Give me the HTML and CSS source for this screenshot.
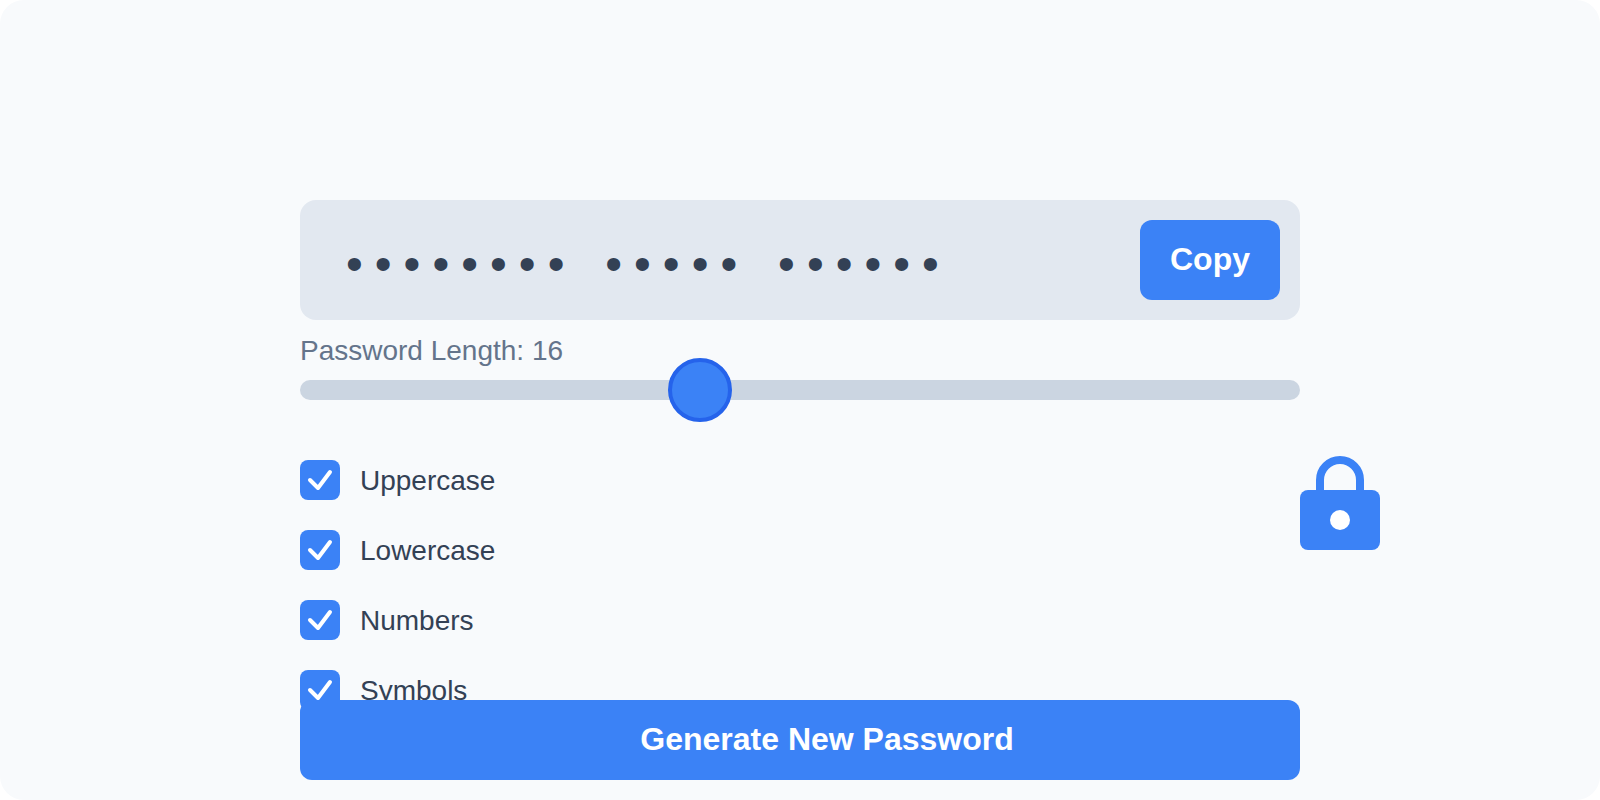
FILE: index.html
```html
<!DOCTYPE html>
<html lang="en">
<head>
<meta charset="utf-8">
<meta name="viewport" content="width=device-width, initial-scale=1">
<title>Password Generator</title>
<link rel="stylesheet" href="styles.css">
</head>
<body>
<main class="page">
  <form class="generator">
    <div class="output">
      <input class="output-field" type="text" value="•••••••• ••••• ••••••" aria-label="Generated password" readonly>
      <button class="button copy" type="button">Copy</button>
    </div>

    <label class="length-label" for="length">Password Length: 16</label>
    <input class="length-slider" id="length" type="range" min="5" max="33" value="16">

    <div class="settings">
      <div class="options">
        <label class="option">
          <span class="check">
            <input class="check-input" type="checkbox" checked>
            <svg class="check-mark" viewBox="0 0 40 40" aria-hidden="true"><path d="M10 20L18 28L30 12"/></svg>
          </span>
          Uppercase
        </label>
        <label class="option">
          <span class="check">
            <input class="check-input" type="checkbox" checked>
            <svg class="check-mark" viewBox="0 0 40 40" aria-hidden="true"><path d="M10 20L18 28L30 12"/></svg>
          </span>
          Lowercase
        </label>
        <label class="option">
          <span class="check">
            <input class="check-input" type="checkbox" checked>
            <svg class="check-mark" viewBox="0 0 40 40" aria-hidden="true"><path d="M10 20L18 28L30 12"/></svg>
          </span>
          Numbers
        </label>
        <label class="option">
          <span class="check">
            <input class="check-input" type="checkbox" checked>
            <svg class="check-mark" viewBox="0 0 40 40" aria-hidden="true"><path d="M10 20L18 28L30 12"/></svg>
          </span>
          Symbols
        </label>
      </div>
      <svg class="lock" viewBox="0 0 80 94" aria-hidden="true">
        <path d="M20 38V24a20 20 0 0 1 40 0v14" fill="none" stroke="#3b82f6" stroke-width="8"/>
        <rect y="34" width="80" height="60" rx="8" fill="#3b82f6"/>
        <circle cx="40" cy="64" r="10" fill="#fff"/>
      </svg>
    </div>

    <button class="button generate" type="button">Generate New Password</button>
  </form>
</main>
</body>
</html>
```

FILE: styles.css
```css
* {
  box-sizing: border-box;
}

body {
  margin: 0;
  background: #fff;
  font-family: "Liberation Sans", Arial, sans-serif;
  font-size: 28px;
  line-height: 42px;
  color: #334155;
}

.page {
  min-height: 100vh;
  padding: 200px 100px 20px;
  border-radius: 24px;
  background: #f8fafc;
}

.generator {
  display: flex;
  flex-direction: column;
  max-width: 1000px;
  margin: 0 auto;
}

.output {
  display: flex;
  align-items: center;
  padding: 20px 20px 20px 40px;
  border-radius: 16px;
  background: #e2e8f0;
}

.output-field {
  flex: 1;
  min-width: 0;
  height: 80px;
  padding: 14px 0 0;
  border: 0;
  outline: 0;
  background: none;
  color: #334155;
  font-family: "Liberation Mono", "Courier New", monospace;
  font-size: 48px;
}

.button {
  height: 80px;
  border: 0;
  border-radius: 12px;
  background: #3b82f6;
  color: #fff;
  font-family: inherit;
  font-size: 32px;
  font-weight: bold;
  line-height: 40px;
  cursor: pointer;
}

.copy {
  padding: 0 30px 2px;
}

.length-label {
  margin-top: 10px;
  color: #64748b;
}

.length-slider {
  appearance: none;
  width: 100%;
  height: 20px;
  margin: 8px 0 0;
  border-radius: 10px;
  background: #cbd5e1;
}

.length-slider::-webkit-slider-thumb {
  appearance: none;
  width: 64px;
  height: 64px;
  border: 4px solid #2563eb;
  border-radius: 50%;
  background: #3b82f6;
}

.settings {
  display: flex;
  justify-content: space-between;
  align-items: flex-start;
  margin-top: 60px;
}

.options {
  display: flex;
  flex-direction: column;
  gap: 28px;
}

.option {
  display: flex;
  align-items: flex-start;
  gap: 20px;
}

.check {
  display: grid;
  width: 40px;
  height: 40px;
}

.check-input,
.check-mark {
  grid-area: 1 / 1;
  width: 40px;
  height: 40px;
  margin: 0;
}

.check-input {
  appearance: none;
  border-radius: 8px;
  background: #cbd5e1;
}

.check-input:checked {
  background: #3b82f6;
}

.check-mark {
  visibility: hidden;
  pointer-events: none;
  fill: none;
  stroke: #fff;
  stroke-width: 4;
  stroke-linecap: round;
  stroke-linejoin: round;
}

.check-input:checked + .check-mark {
  visibility: visible;
}

/* The lock hangs outside the right edge of the column. */
.lock {
  width: 80px;
  height: 94px;
  margin: -4px -80px 0 0;
}

/* The button covers the lower edge of the last option. */
.generate {
  z-index: 1;
  margin-top: -12px;
  padding: 0 0 2px 54px;
}
```
